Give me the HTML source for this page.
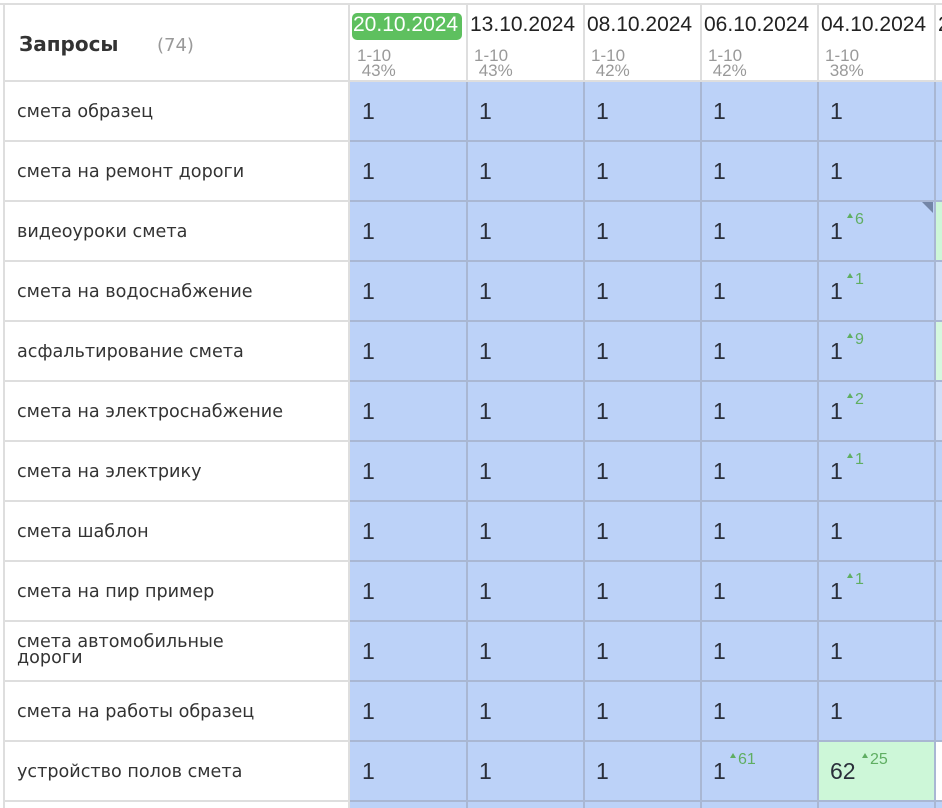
<!DOCTYPE html>
<html><head><meta charset="utf-8"><style>
html,body{margin:0;width:942px;height:808px;overflow:hidden}
body{background:#fff;font-family:"Liberation Sans","DejaVu Sans",sans-serif;position:relative}
.a{position:absolute}
.hl{position:absolute;height:2px;background:#dedede}
.vl{position:absolute;width:2px;background:#dedede}
.q{position:absolute;left:17px;font-size:17.6px;font-family:"DejaVu Sans",sans-serif;color:#333;line-height:17px}
.c{position:absolute;top:0;height:58px;background:#bcd2f8}
.d{position:absolute;top:13px;font-size:21px;color:#222}
.s{position:absolute;font-size:17px;color:#999;line-height:15px}
.m{position:absolute;font-size:23px;color:#2a2f3a;line-height:23px}
.up{position:absolute;font-size:16px;color:#5fae62}
.up:before{content:"";display:inline-block;border-left:3px solid transparent;border-right:3px solid transparent;border-bottom:5px solid #5fae62;margin-right:2px;vertical-align:6px}
.r{position:absolute;left:350px;width:592px;height:60px;background:#a9b7d3;overflow:hidden}
.r .c:nth-child(1){left:0;width:116px}
.r .c:nth-child(2){left:118px;width:115px}
.r .c:nth-child(3){left:235px;width:115px}
.r .c:nth-child(4){left:352px;width:115px}
.r .c:nth-child(5){left:469px;width:115px}
.r .c:nth-child(6){left:586px;width:6px}
</style></head><body>
<div class="hl" style="left:0;top:3px;width:942px"></div>
<div class="vl" style="left:3px;top:4px;height:804px"></div>
<div class="a" style="left:19px;top:32px;font-size:20px;font-weight:bold;color:#333;font-family:'DejaVu Sans',sans-serif">Запросы</div>
<div class="a" style="left:157px;top:35px;font-size:18px;color:#999;font-family:'DejaVu Sans',sans-serif">(74)</div>
<div class="a" style="left:352px;top:13px;width:110px;height:27px;background:#5ec05f;border-radius:5px"></div>
<div class="d" style="left:353px;color:#fff">20.10.2024</div>
<div class="d" style="left:470px">13.10.2024</div>
<div class="d" style="left:587px">08.10.2024</div>
<div class="d" style="left:704px">06.10.2024</div>
<div class="d" style="left:821px">04.10.2024</div>
<div class="d" style="left:938px">2</div>
<div class="s" style="left:357px;top:48px">1-10<br>&nbsp;43%</div>
<div class="s" style="left:474px;top:48px">1-10<br>&nbsp;43%</div>
<div class="s" style="left:591px;top:48px">1-10<br>&nbsp;42%</div>
<div class="s" style="left:708px;top:48px">1-10<br>&nbsp;42%</div>
<div class="s" style="left:825px;top:48px">1-10<br>&nbsp;38%</div>
<div class="vl" style="left:466px;top:4px;height:78px"></div>
<div class="vl" style="left:583px;top:4px;height:78px"></div>
<div class="vl" style="left:700px;top:4px;height:78px"></div>
<div class="vl" style="left:817px;top:4px;height:78px"></div>
<div class="vl" style="left:934px;top:4px;height:78px"></div>
<div class="vl" style="left:348px;top:4px;height:804px"></div>

<div class="hl" style="left:4px;top:80px;width:938px"></div>
<div class="hl" style="left:4px;top:140px;width:344px"></div>
<div class="hl" style="left:4px;top:200px;width:344px"></div>
<div class="hl" style="left:4px;top:260px;width:344px"></div>
<div class="hl" style="left:4px;top:320px;width:344px"></div>
<div class="hl" style="left:4px;top:380px;width:344px"></div>
<div class="hl" style="left:4px;top:440px;width:344px"></div>
<div class="hl" style="left:4px;top:500px;width:344px"></div>
<div class="hl" style="left:4px;top:560px;width:344px"></div>
<div class="hl" style="left:4px;top:620px;width:344px"></div>
<div class="hl" style="left:4px;top:680px;width:344px"></div>
<div class="hl" style="left:4px;top:740px;width:344px"></div>
<div class="hl" style="left:4px;top:800px;width:344px"></div>

<div class="q" style="top:104px">смета образец</div>
<div class="q" style="top:164px">смета на ремонт дороги</div>
<div class="q" style="top:224px">видеоуроки смета</div>
<div class="q" style="top:284px">смета на водоснабжение</div>
<div class="q" style="top:344px">асфальтирование смета</div>
<div class="q" style="top:404px">смета на электроснабжение</div>
<div class="q" style="top:464px">смета на электрику</div>
<div class="q" style="top:524px">смета шаблон</div>
<div class="q" style="top:584px">смета на пир пример</div>
<div class="q" style="top:634px;line-height:16px">смета автомобильные<br>дороги</div>
<div class="q" style="top:704px">смета на работы образец</div>
<div class="q" style="top:764px">устройство полов смета</div>

<div class="r" style="top:82px"><div class="c"></div><div class="c"></div><div class="c"></div><div class="c"></div><div class="c"></div><div class="c"></div></div>
<div class="r" style="top:142px"><div class="c"></div><div class="c"></div><div class="c"></div><div class="c"></div><div class="c"></div><div class="c"></div></div>
<div class="r" style="top:202px"><div class="c"></div><div class="c"></div><div class="c"></div><div class="c"></div><div class="c"></div><div class="c" style="background:#cdf7d8"></div></div>
<div class="r" style="top:262px"><div class="c"></div><div class="c"></div><div class="c"></div><div class="c"></div><div class="c"></div><div class="c" style="background:#cfdff9"></div></div>
<div class="r" style="top:322px"><div class="c"></div><div class="c"></div><div class="c"></div><div class="c"></div><div class="c"></div><div class="c" style="background:#d5f8df"></div></div>
<div class="r" style="top:382px"><div class="c"></div><div class="c"></div><div class="c"></div><div class="c"></div><div class="c"></div><div class="c" style="background:#cfdff9"></div></div>
<div class="r" style="top:442px"><div class="c"></div><div class="c"></div><div class="c"></div><div class="c"></div><div class="c"></div><div class="c"></div></div>
<div class="r" style="top:502px"><div class="c"></div><div class="c"></div><div class="c"></div><div class="c"></div><div class="c"></div><div class="c"></div></div>
<div class="r" style="top:562px"><div class="c"></div><div class="c"></div><div class="c"></div><div class="c"></div><div class="c"></div><div class="c"></div></div>
<div class="r" style="top:622px"><div class="c"></div><div class="c"></div><div class="c"></div><div class="c"></div><div class="c"></div><div class="c"></div></div>
<div class="r" style="top:682px"><div class="c"></div><div class="c"></div><div class="c"></div><div class="c"></div><div class="c"></div><div class="c"></div></div>
<div class="r" style="top:742px"><div class="c"></div><div class="c"></div><div class="c"></div><div class="c"></div><div class="c" style="background:#cdf7d8"></div><div class="c" style="background:#fff"></div></div>
<div class="r" style="top:802px;height:6px"><div class="c"></div><div class="c"></div><div class="c"></div><div class="c"></div><div class="c"></div><div class="c"></div></div>

<div class="m" style="left:362px;top:100px">1</div><div class="m" style="left:479px;top:100px">1</div><div class="m" style="left:596px;top:100px">1</div><div class="m" style="left:713px;top:100px">1</div><div class="m" style="left:830px;top:100px">1</div>
<div class="m" style="left:362px;top:160px">1</div><div class="m" style="left:479px;top:160px">1</div><div class="m" style="left:596px;top:160px">1</div><div class="m" style="left:713px;top:160px">1</div><div class="m" style="left:830px;top:160px">1</div>
<div class="m" style="left:362px;top:220px">1</div><div class="m" style="left:479px;top:220px">1</div><div class="m" style="left:596px;top:220px">1</div><div class="m" style="left:713px;top:220px">1</div><div class="m" style="left:830px;top:220px">1</div><div class="up" style="left:847px;top:211px">6</div>
<div class="m" style="left:362px;top:280px">1</div><div class="m" style="left:479px;top:280px">1</div><div class="m" style="left:596px;top:280px">1</div><div class="m" style="left:713px;top:280px">1</div><div class="m" style="left:830px;top:280px">1</div><div class="up" style="left:847px;top:271px">1</div>
<div class="m" style="left:362px;top:340px">1</div><div class="m" style="left:479px;top:340px">1</div><div class="m" style="left:596px;top:340px">1</div><div class="m" style="left:713px;top:340px">1</div><div class="m" style="left:830px;top:340px">1</div><div class="up" style="left:847px;top:331px">9</div>
<div class="m" style="left:362px;top:400px">1</div><div class="m" style="left:479px;top:400px">1</div><div class="m" style="left:596px;top:400px">1</div><div class="m" style="left:713px;top:400px">1</div><div class="m" style="left:830px;top:400px">1</div><div class="up" style="left:847px;top:391px">2</div>
<div class="m" style="left:362px;top:460px">1</div><div class="m" style="left:479px;top:460px">1</div><div class="m" style="left:596px;top:460px">1</div><div class="m" style="left:713px;top:460px">1</div><div class="m" style="left:830px;top:460px">1</div><div class="up" style="left:847px;top:451px">1</div>
<div class="m" style="left:362px;top:520px">1</div><div class="m" style="left:479px;top:520px">1</div><div class="m" style="left:596px;top:520px">1</div><div class="m" style="left:713px;top:520px">1</div><div class="m" style="left:830px;top:520px">1</div>
<div class="m" style="left:362px;top:580px">1</div><div class="m" style="left:479px;top:580px">1</div><div class="m" style="left:596px;top:580px">1</div><div class="m" style="left:713px;top:580px">1</div><div class="m" style="left:830px;top:580px">1</div><div class="up" style="left:847px;top:571px">1</div>
<div class="m" style="left:362px;top:640px">1</div><div class="m" style="left:479px;top:640px">1</div><div class="m" style="left:596px;top:640px">1</div><div class="m" style="left:713px;top:640px">1</div><div class="m" style="left:830px;top:640px">1</div>
<div class="m" style="left:362px;top:700px">1</div><div class="m" style="left:479px;top:700px">1</div><div class="m" style="left:596px;top:700px">1</div><div class="m" style="left:713px;top:700px">1</div><div class="m" style="left:830px;top:700px">1</div>
<div class="m" style="left:362px;top:760px">1</div><div class="m" style="left:479px;top:760px">1</div><div class="m" style="left:596px;top:760px">1</div><div class="m" style="left:713px;top:760px">1</div><div class="up" style="left:730px;top:751px">61</div><div class="m" style="left:830px;top:760px">62</div><div class="up" style="left:862px;top:751px">25</div>
<div class="a" style="left:922px;top:202px;width:0;height:0;border-top:11px solid #7486a6;border-left:11px solid transparent"></div>
</body></html>
